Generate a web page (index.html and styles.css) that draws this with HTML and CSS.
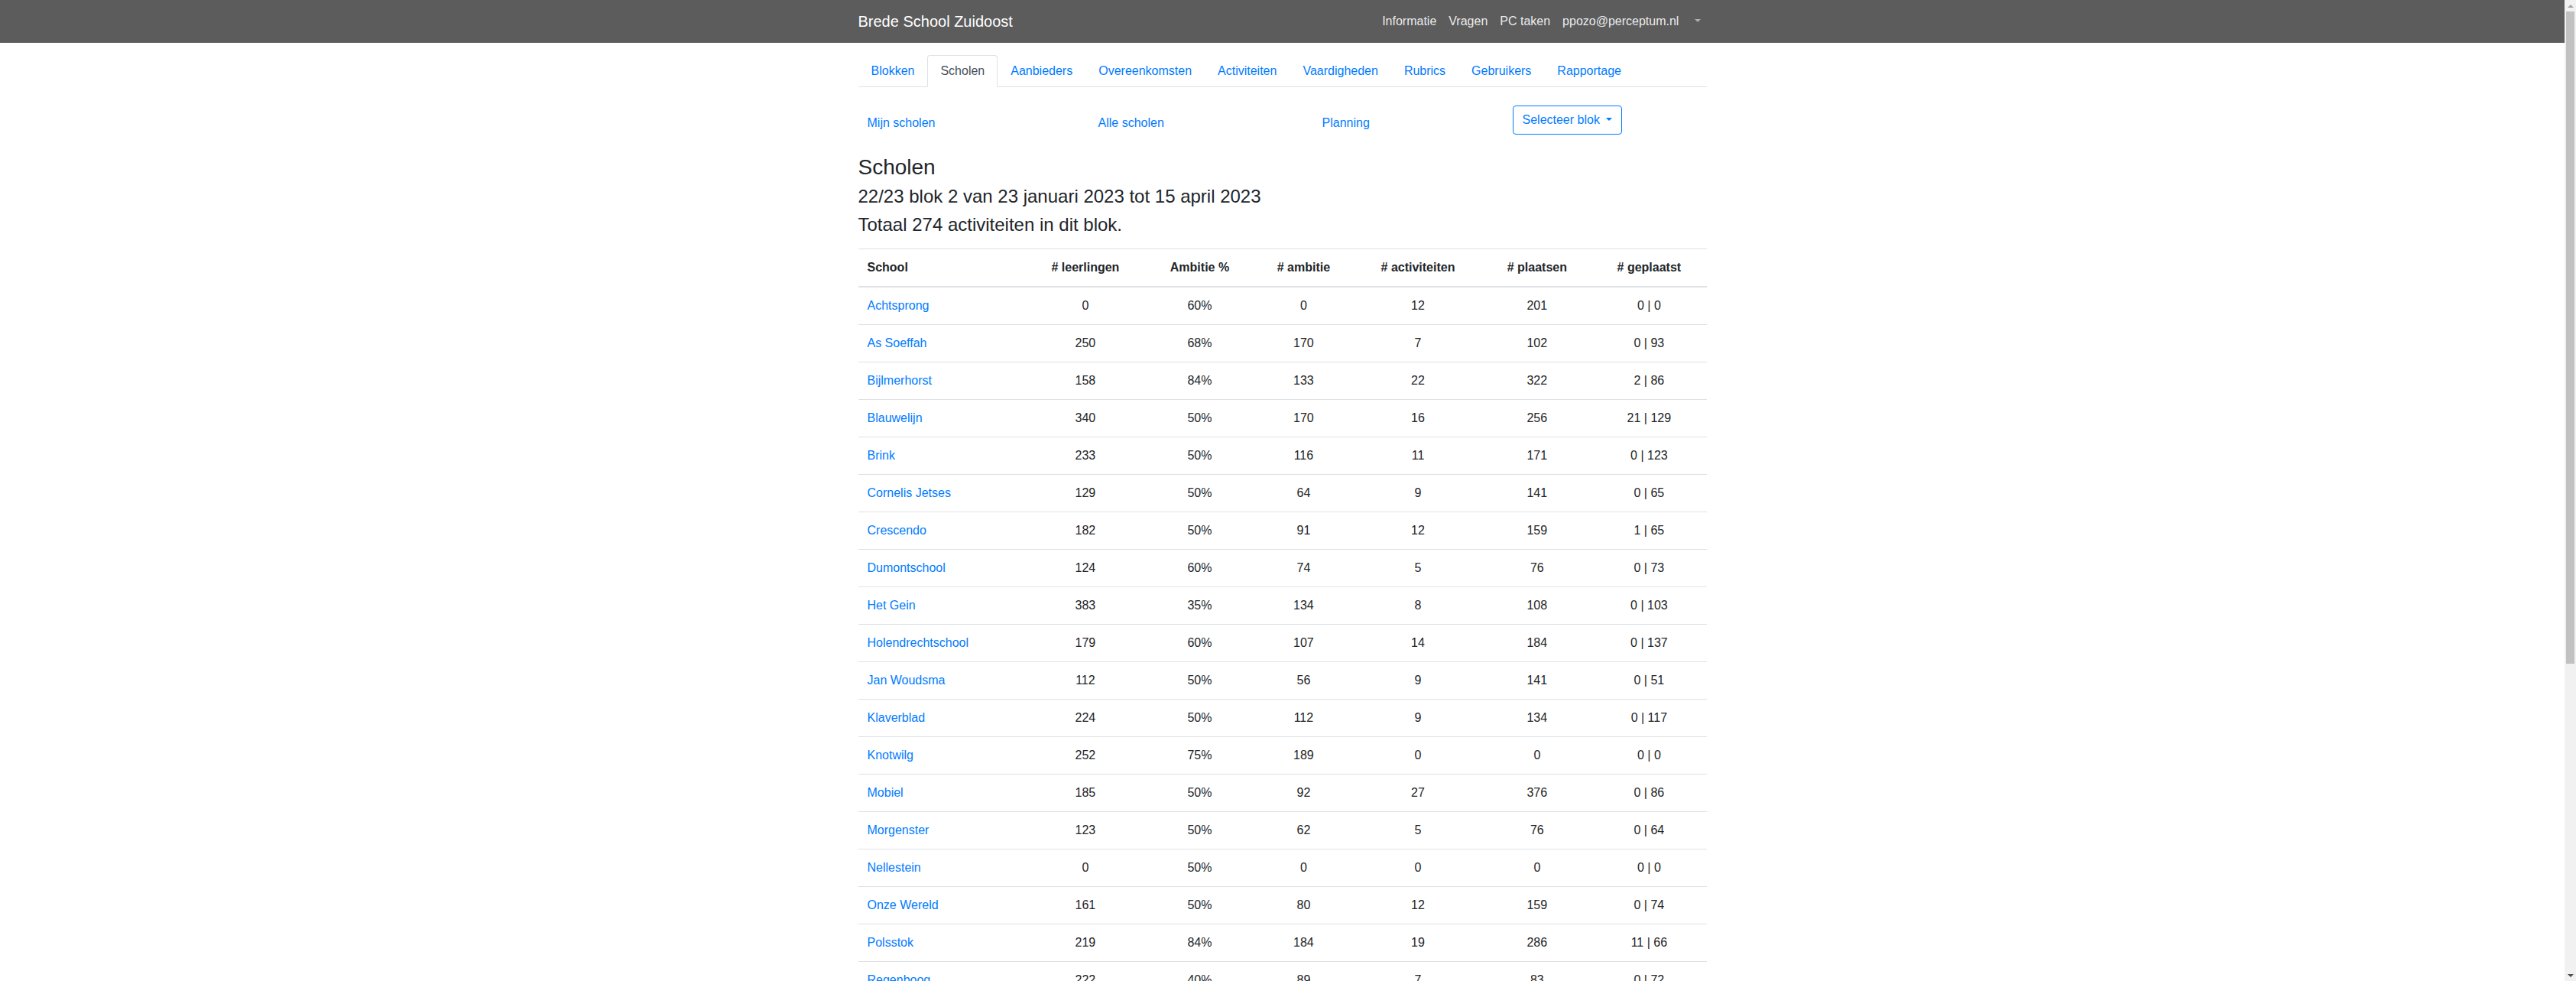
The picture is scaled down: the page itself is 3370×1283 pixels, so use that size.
FILE: index.html
```html
<!DOCTYPE html>
<html lang="nl">
<head>
<meta charset="utf-8">
<title>Scholen - Brede School Zuidoost</title>
<link rel="stylesheet" href="styles.css">
</head>
<body>
<nav class="topbar">
  <div class="wrap topbar-inner">
    <a class="brand" href="#">Brede School Zuidoost</a>
    <ul class="topnav">
      <li><a href="#">Informatie</a></li>
      <li><a href="#">Vragen</a></li>
      <li><a href="#">PC taken</a></li>
      <li><a href="#">ppozo@perceptum.nl</a></li>
      <li><a href="#" class="toggle"><span class="caret"></span></a></li>
    </ul>
  </div>
</nav>

<main class="wrap page">
  <ul class="tabs">
    <li><a href="#">Blokken</a></li>
    <li><a href="#" class="active">Scholen</a></li>
    <li><a href="#">Aanbieders</a></li>
    <li><a href="#">Overeenkomsten</a></li>
    <li><a href="#">Activiteiten</a></li>
    <li><a href="#">Vaardigheden</a></li>
    <li><a href="#">Rubrics</a></li>
    <li><a href="#">Gebruikers</a></li>
    <li><a href="#">Rapportage</a></li>
  </ul>

  <div class="subnav">
    <a href="#" class="sublink">Mijn scholen</a>
    <a href="#" class="sublink">Alle scholen</a>
    <a href="#" class="sublink">Planning</a>
    <div class="subcell"><button class="btn-outline" type="button">Selecteer blok <span class="caret"></span></button></div>
  </div>

  <h3 class="title">Scholen</h3>
  <h4 class="subtitle">22/23 blok 2 van 23 januari 2023 tot 15 april 2023</h4>
  <h4 class="subtitle">Totaal 274 activiteiten in dit blok.</h4>

  <table class="schools">
    <thead>
      <tr><th>School</th><th># leerlingen</th><th>Ambitie %</th><th># ambitie</th><th># activiteiten</th><th># plaatsen</th><th># geplaatst</th></tr>
    </thead>
    <tbody>
      <tr><td><a href="#">Achtsprong</a></td><td>0</td><td>60%</td><td>0</td><td>12</td><td>201</td><td>0 | 0</td></tr>
      <tr><td><a href="#">As Soeffah</a></td><td>250</td><td>68%</td><td>170</td><td>7</td><td>102</td><td>0 | 93</td></tr>
      <tr><td><a href="#">Bijlmerhorst</a></td><td>158</td><td>84%</td><td>133</td><td>22</td><td>322</td><td>2 | 86</td></tr>
      <tr><td><a href="#">Blauwelijn</a></td><td>340</td><td>50%</td><td>170</td><td>16</td><td>256</td><td>21 | 129</td></tr>
      <tr><td><a href="#">Brink</a></td><td>233</td><td>50%</td><td>116</td><td>11</td><td>171</td><td>0 | 123</td></tr>
      <tr><td><a href="#">Cornelis Jetses</a></td><td>129</td><td>50%</td><td>64</td><td>9</td><td>141</td><td>0 | 65</td></tr>
      <tr><td><a href="#">Crescendo</a></td><td>182</td><td>50%</td><td>91</td><td>12</td><td>159</td><td>1 | 65</td></tr>
      <tr><td><a href="#">Dumontschool</a></td><td>124</td><td>60%</td><td>74</td><td>5</td><td>76</td><td>0 | 73</td></tr>
      <tr><td><a href="#">Het Gein</a></td><td>383</td><td>35%</td><td>134</td><td>8</td><td>108</td><td>0 | 103</td></tr>
      <tr><td><a href="#">Holendrechtschool</a></td><td>179</td><td>60%</td><td>107</td><td>14</td><td>184</td><td>0 | 137</td></tr>
      <tr><td><a href="#">Jan Woudsma</a></td><td>112</td><td>50%</td><td>56</td><td>9</td><td>141</td><td>0 | 51</td></tr>
      <tr><td><a href="#">Klaverblad</a></td><td>224</td><td>50%</td><td>112</td><td>9</td><td>134</td><td>0 | 117</td></tr>
      <tr><td><a href="#">Knotwilg</a></td><td>252</td><td>75%</td><td>189</td><td>0</td><td>0</td><td>0 | 0</td></tr>
      <tr><td><a href="#">Mobiel</a></td><td>185</td><td>50%</td><td>92</td><td>27</td><td>376</td><td>0 | 86</td></tr>
      <tr><td><a href="#">Morgenster</a></td><td>123</td><td>50%</td><td>62</td><td>5</td><td>76</td><td>0 | 64</td></tr>
      <tr><td><a href="#">Nellestein</a></td><td>0</td><td>50%</td><td>0</td><td>0</td><td>0</td><td>0 | 0</td></tr>
      <tr><td><a href="#">Onze Wereld</a></td><td>161</td><td>50%</td><td>80</td><td>12</td><td>159</td><td>0 | 74</td></tr>
      <tr><td><a href="#">Polsstok</a></td><td>219</td><td>84%</td><td>184</td><td>19</td><td>286</td><td>11 | 66</td></tr>
      <tr><td><a href="#">Regenboog</a></td><td>222</td><td>40%</td><td>89</td><td>7</td><td>83</td><td>0 | 72</td></tr>
    </tbody>
  </table>
</main>

<div class="scrollbar" aria-hidden="true">
  <span class="sb-btn sb-up"></span>
  <span class="sb-track"><span class="sb-thumb"></span></span>
  <span class="sb-btn sb-down"></span>
</div>
</body>
</html>
```

FILE: styles.css
```css
* { box-sizing: border-box; }

body {
  margin: 0 15px 0 0;
  font-family: "Liberation Sans", Arial, sans-serif;
  font-size: 16px;
  line-height: 1.5;
  color: #212529;
  background: #fff;
}

a { color: #007bff; text-decoration: none; }

.wrap {
  max-width: 1140px;
  margin: 0 auto;
  padding: 0 15px;
}

/* top bar */
.topbar {
  background: #5c5c5c;
  padding: 8px 16px;
}
.topbar-inner {
  display: flex;
  align-items: center;
  justify-content: space-between;
}
.brand {
  color: #fff;
  font-size: 20px;
  line-height: 30px;
  padding: 5px 0;
  margin-right: 16px;
}
.topnav {
  display: flex;
  list-style: none;
  margin: 0;
  padding: 0;
}
.topnav a {
  display: block;
  padding: 8px;
  color: rgba(255, 255, 255, 0.9);
}
.topnav a.toggle { color: rgba(255, 255, 255, 0.5); }

.caret {
  display: inline-block;
  margin-left: 0.255em;
  vertical-align: 0.255em;
  border-top: 0.3em solid;
  border-right: 0.3em solid transparent;
  border-left: 0.3em solid transparent;
}

/* page */
.page { padding-top: 16px; padding-bottom: 16px; }

.tabs {
  display: flex;
  list-style: none;
  margin: 0;
  padding: 0;
  border-bottom: 1px solid #dee2e6;
}
.tabs li { margin-bottom: -1px; }
.tabs a {
  display: block;
  padding: 8px 16px;
  border: 1px solid transparent;
  border-radius: 4px 4px 0 0;
}
.tabs a.active {
  color: #495057;
  background: #fff;
  border-color: #dee2e6 #dee2e6 #fff;
}

.subnav {
  display: grid;
  grid-template-columns: 302px 293px 249px 1fr;
  align-items: start;
  margin: 24px 0 25.5px;
}
.sublink {
  padding: 10.5px 12px 0;
}
.subcell { padding: 0 12px; }

.btn-outline {
  font: inherit;
  line-height: 1.5;
  color: #007bff;
  background: transparent;
  border: 1px solid #007bff;
  border-radius: 4px;
  padding: 6px 12px;
  cursor: pointer;
}

.title {
  margin: 0 0 8px;
  font-size: 28px;
  font-weight: 500;
  line-height: 1.2;
}
.subtitle {
  margin: 0 0 8px;
  font-size: 24px;
  font-weight: 500;
  line-height: 1.2;
}

/* table */
.schools {
  width: 100%;
  margin: 16.5px 0 16px;
  border-collapse: collapse;
}
.schools th,
.schools td {
  padding: 12px;
  border-top: 1px solid #dee2e6;
  text-align: center;
  vertical-align: top;
}
.schools th:first-child,
.schools td:first-child { text-align: left; }
.schools thead th {
  vertical-align: bottom;
  border-bottom: 2px solid #dee2e6;
}

/* browser scrollbar as seen in the screenshot */
.scrollbar {
  position: fixed;
  top: 0;
  right: 0;
  bottom: 0;
  width: 15px;
  display: flex;
  flex-direction: column;
  background: #f1f1f1;
}
.sb-btn {
  height: 15px;
  display: flex;
  align-items: center;
  justify-content: center;
}
.sb-up::before,
.sb-down::before {
  content: "";
  border-left: 4px solid transparent;
  border-right: 4px solid transparent;
}
.sb-up::before { border-bottom: 4px solid #a3a3a3; }
.sb-down::before { border-top: 4px solid #505050; }
.sb-track {
  flex: 1;
  padding: 0 2px;
}
.sb-thumb {
  display: block;
  height: 853px;
  background: #c1c1c1;
}
```
